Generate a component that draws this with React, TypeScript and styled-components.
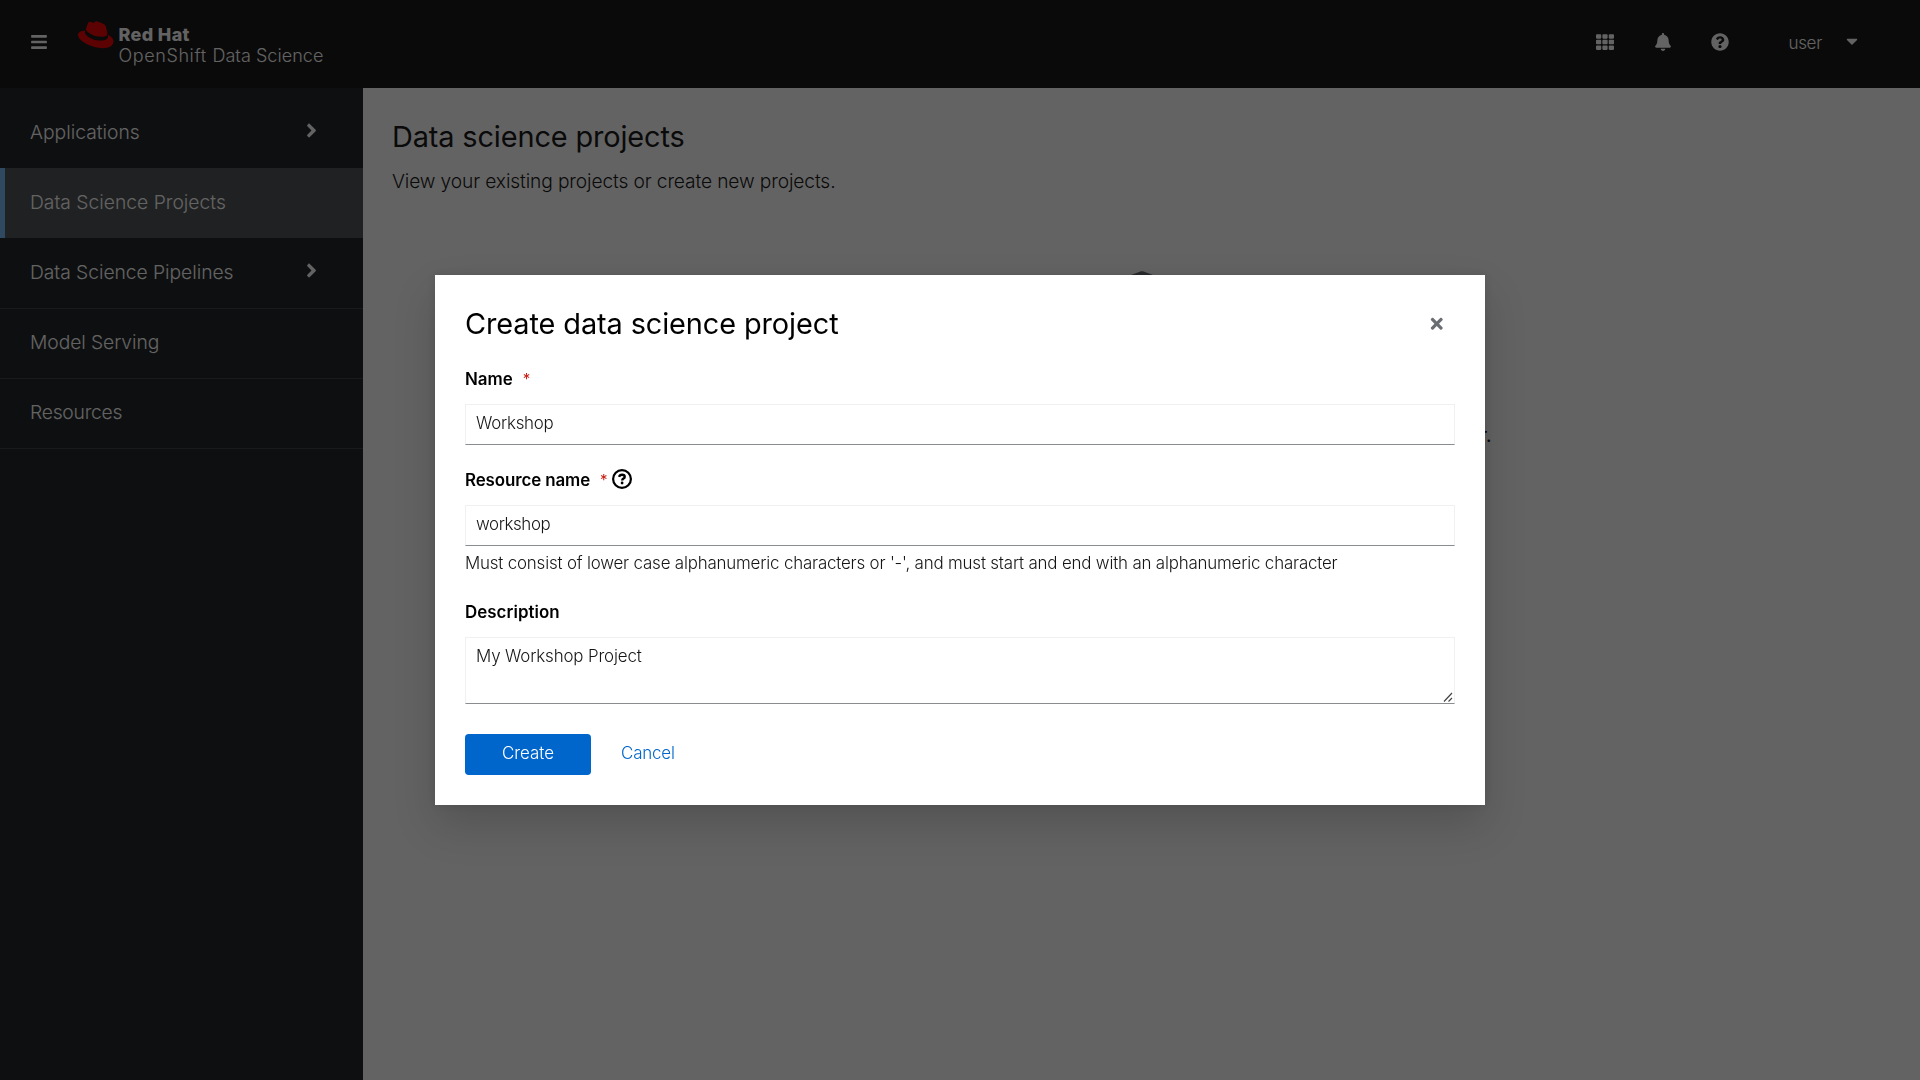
import React from "react";
import styled, { createGlobalStyle } from "styled-components";
import {
  FaAngleRight,
  FaBars,
  FaBell,
  FaCaretDown,
  FaCubes,
  FaQuestionCircle,
  FaTh,
  FaTimes,
} from "react-icons/fa";
import { SiRedhat } from "react-icons/si";

const GlobalStyle = createGlobalStyle`
  *, *::before, *::after { box-sizing: border-box; }
  body {
    margin: 0;
    overflow: hidden;
    background: #fff;
    color: #151515;
    font-family: Inter, "Open Sans", sans-serif;
  }
  h1, p { margin: 0; }
  button, input, textarea { font-family: inherit; }
  svg { display: block; flex: none; }
`;

const Page = styled.div`
  display: flex;
  flex-direction: column;
  height: 1080px;
`;

const Header = styled.header`
  display: flex;
  justify-content: space-between;
  height: 88px;
  background: #151515;
  color: #fff;
`;

const HeaderGroup = styled.div`
  display: flex;
  align-items: flex-start;
`;

const IconButton = styled.button<{ $size: number }>`
  display: flex;
  padding: 0;
  border: 0;
  background: none;
  color: inherit;
  font-size: ${(p) => p.$size}px;
`;

const Burger = styled(IconButton)`
  margin: 33px 0 0 30px;
`;

const Brand = styled.div`
  display: flex;
  margin-left: 30px;
`;

const Hat = styled(SiRedhat)`
  width: 35.5px;
  height: 35.5px;
  margin-top: 17px;
  color: #e00;
`;

const BrandText = styled.div`
  margin: 24px 0 0 5px;
  font-size: 18px;
  line-height: 21px;
  white-space: nowrap;
`;

const BrandWord = styled.span<{ $weight: number; $spacing: number }>`
  font-weight: ${(p) => p.$weight};
  letter-spacing: ${(p) => p.$spacing}px;
`;

const Tools = styled.div`
  display: flex;
  gap: 39.5px;
  padding-top: 33px;
`;

const UserMenu = styled.div`
  display: flex;
  gap: 21px;
  margin: 32px 59px 0 59px;
  font-size: 17px;
  font-weight: 300;
  line-height: 23px;
  letter-spacing: -0.3px;
`;

const Caret = styled(FaCaretDown)`
  width: 18px;
  height: 18px;
`;

const Body = styled.div`
  display: flex;
  flex: 1;
  min-height: 0;
`;

const Sidebar = styled.aside`
  width: 363px;
  padding-top: 10px;
  background: #212427;
`;

const NavList = styled.nav`
  display: flex;
  flex-direction: column;
  border-bottom: 1px solid #3c3f42;
`;

const NavItem = styled.a<{ $active?: boolean; $divided?: boolean; $spacing?: number }>`
  display: flex;
  align-items: center;
  justify-content: space-between;
  height: 70px;
  padding: 0 46px 3px 30px;
  color: #fff;
  background: ${(p) => (p.$active ? "#4f5255" : "transparent")};
  box-shadow: ${(p) =>
    p.$active ? "inset 5px 0 #73bcf7" : p.$divided ? "inset 0 1px #3c3f42" : "none"};
  font-size: 19.3px;
  font-weight: 300;
  line-height: 26px;
  letter-spacing: ${(p) => p.$spacing ?? 0}px;
`;

const NavArrow = styled(FaAngleRight)`
  width: 11px;
  height: 23px;
  margin-bottom: 2px;
`;

const Main = styled.main`
  display: flex;
  flex: 1;
  flex-direction: column;
  background: #fff;
`;

const PageHead = styled.div`
  padding: 29px 29px 0;
`;

const PageTitle = styled.h1`
  font-size: 28.9px;
  font-weight: 400;
  line-height: 39px;
  letter-spacing: -0.13px;
`;

const PageText = styled.p`
  margin-top: 10px;
  font-size: 19.2px;
  font-weight: 350;
  line-height: 30px;
  letter-spacing: -0.12px;
`;

const EmptyState = styled.div`
  display: flex;
  flex-direction: column;
  align-items: center;
  gap: 85px;
  padding-top: 71px;
`;

const EmptyIcon = styled(FaCubes)`
  width: 68px;
  height: 68px;
  color: #6a6e73;
`;

const EmptyText = styled.p`
  font-size: 19.2px;
  line-height: 30px;
  letter-spacing: -0.17px;
`;

const Backdrop = styled.div`
  position: fixed;
  inset: 0;
  display: flex;
  align-items: center;
  justify-content: center;
  background: rgba(3, 3, 3, 0.62);
`;

const Modal = styled.section`
  display: flex;
  flex-direction: column;
  width: 1050px;
  height: 530px;
  padding: 30px;
  background: #fff;
  box-shadow: 0 20px 40px rgba(3, 3, 3, 0.16), 0 0 7.5px rgba(3, 3, 3, 0.1);
`;

const ModalHead = styled.div`
  display: flex;
  align-items: center;
  justify-content: space-between;
  height: 39px;
  margin-bottom: 22px;
  padding-right: 10px;
`;

const ModalTitle = styled.h1`
  color: #000;
  font-size: 28.9px;
  font-weight: 400;
  line-height: 37px;
  letter-spacing: -0.1px;
  padding-bottom: 2px;
`;

const Close = styled(IconButton)`
  padding-bottom: 2px;
  color: #6a6e73;
`;

const Field = styled.div<{ $after: number }>`
  display: flex;
  flex-direction: column;
  margin-bottom: ${(p) => p.$after}px;
`;

const Label = styled.label<{ $spacing: number }>`
  display: flex;
  align-items: center;
  height: 26px;
  margin-bottom: 12px;
  color: #000;
  font-size: 16.9px;
  font-weight: 600;
  line-height: 26px;
  letter-spacing: ${(p) => p.$spacing}px;
`;

const Required = styled.span`
  margin: 0 5px 0 10px;
  color: #c9190b;
  font-size: 15px;
  font-weight: 400;
  line-height: 20px;
`;

const inputBase = `
  display: block;
  width: 990px;
  border: 1px solid #f0f0f0;
  border-bottom-color: #8a8d90;
  border-radius: 0;
  outline: 0;
  background: #fff;
  color: #151515;
  font-size: 16.9px;
  font-weight: 350;
`;

const Input = styled.input<{ $spacing: number }>`
  ${inputBase}
  height: 41px;
  padding: 0 10px 3px;
  letter-spacing: ${(p) => p.$spacing}px;
`;

const AreaWrap = styled.div`
  position: relative;
`;

const Area = styled.textarea`
  ${inputBase}
  height: 67px;
  padding: 5px 10px;
  line-height: 26px;
  letter-spacing: -0.14px;
  resize: none;
`;

const Grip = styled.svg`
  position: absolute;
  right: 2px;
  bottom: 2px;
`;

const Helper = styled.p`
  margin-top: 4px;
  font-size: 16.9px;
  font-weight: 350;
  line-height: 26px;
  letter-spacing: -0.18px;
  white-space: nowrap;
`;

const Actions = styled.div`
  display: flex;
  gap: 30px;
`;

const Button = styled.button<{ $primary?: boolean }>`
  width: ${(p) => (p.$primary ? "126px" : "auto")};
  height: 41px;
  padding: 0 0 3px;
  border: 0;
  border-radius: 3.75px;
  background: ${(p) => (p.$primary ? "#06c" : "transparent")};
  color: ${(p) => (p.$primary ? "#fff" : "#06c")};
  font-size: 16.9px;
  font-weight: 350;
  letter-spacing: ${(p) => (p.$primary ? 0 : -0.15)}px;
`;

const HelpMark = styled.svg`
  margin-bottom: 3px;
`;

const HelpIcon = () => (
  <HelpMark width="20" height="20" viewBox="0 0 20 20" fill="none" stroke="#000">
    <circle cx="10" cy="10" r="8.9" strokeWidth="2.2" />
    <path
      d="M7.1 7.9C7.5 6.5 8.5 5.8 10 5.8c1.6 0 2.7.8 2.7 2.1 0 1.8-2.5 1.6-2.5 3.6"
      strokeWidth="2.4"
    />
    <circle cx="10.1" cy="14" r="1.4" fill="#000" stroke="none" />
  </HelpMark>
);

const navItems = [
  { label: "Applications", arrow: true },
  { label: "Data Science Projects", active: true },
  { label: "Data Science Pipelines", arrow: true, spacing: -0.05 },
  { label: "Model Serving", divided: true, spacing: -0.08 },
  { label: "Resources", divided: true, spacing: -0.25 },
];

export default function App() {
  return (
    <>
      <GlobalStyle />
      <Page>
        <Header>
          <HeaderGroup>
            <Burger $size={18} aria-label="Toggle navigation">
              <FaBars />
            </Burger>
            <Brand>
              <Hat />
              <BrandText>
                <BrandWord $weight={800} $spacing={0.35}>Red Hat</BrandWord>
                <br />
                <BrandWord $weight={350} $spacing={0.6}>OpenShift </BrandWord>
                <BrandWord $weight={300} $spacing={0.05}>Data Science</BrandWord>
              </BrandText>
            </Brand>
          </HeaderGroup>
          <HeaderGroup>
            <Tools>
              <IconButton $size={18} aria-label="Applications"><FaTh /></IconButton>
              <IconButton $size={18} aria-label="Notifications"><FaBell /></IconButton>
              <IconButton $size={18} aria-label="Help"><FaQuestionCircle /></IconButton>
            </Tools>
            <UserMenu>
              user
              <Caret />
            </UserMenu>
          </HeaderGroup>
        </Header>
        <Body>
          <Sidebar>
            <NavList>
              {navItems.map((item) => (
                <NavItem
                  key={item.label}
                  $active={item.active}
                  $divided={item.divided}
                  $spacing={item.spacing}
                >
                  {item.label}
                  {item.arrow && <NavArrow />}
                </NavItem>
              ))}
            </NavList>
          </Sidebar>
          <Main>
            <PageHead>
              <PageTitle>Data science projects</PageTitle>
              <PageText>View your existing projects or create new projects.</PageText>
            </PageHead>
            <EmptyState>
              <EmptyIcon />
              <EmptyText>
                To get started, create data science projects or launch a notebook with Jupyter.
              </EmptyText>
            </EmptyState>
          </Main>
        </Body>
      </Page>
      <Backdrop>
        <Modal role="dialog">
          <ModalHead>
            <ModalTitle>Create data science project</ModalTitle>
            <Close $size={17.5} aria-label="Close"><FaTimes /></Close>
          </ModalHead>
          <Field $after={22}>
            <Label $spacing={0}>Name <Required>*</Required></Label>
            <Input $spacing={-0.25} defaultValue="Workshop" />
          </Field>
          <Field $after={23}>
            <Label $spacing={-0.1}>Resource name <Required>*</Required><HelpIcon /></Label>
            <Input $spacing={-0.4} defaultValue="workshop" />
            <Helper>
              Must consist of lower case alphanumeric characters or '-', and must start and end with
              an alphanumeric character
            </Helper>
          </Field>
          <Field $after={30}>
            <Label $spacing={0.05}>Description</Label>
            <AreaWrap>
              <Area defaultValue="My Workshop Project" />
              <Grip width="10" height="10" viewBox="0 0 10 10" stroke="#444" strokeWidth="1.2">
                <path d="M1 9.5L9 1M5.5 9.5L9 6" />
              </Grip>
            </AreaWrap>
          </Field>
          <Actions>
            <Button $primary>Create</Button>
            <Button>Cancel</Button>
          </Actions>
        </Modal>
      </Backdrop>
    </>
  );
}
